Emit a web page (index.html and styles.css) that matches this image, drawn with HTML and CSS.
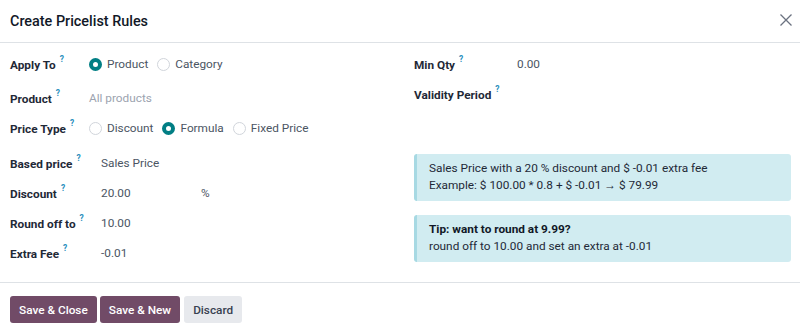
FILE: index.html
```html
<!DOCTYPE html>
<html>
<head>
<meta charset="utf-8">
<link rel="stylesheet" href="styles.css">
</head>
<body>
<div class="dialog">
  <header class="header">
    <h4 class="title">Create Pricelist Rules</h4>
    <span class="close">
      <svg width="12" height="12" viewBox="0 0 12 12"><path d="M0.5 0.5L11.5 11.5M11.5 0.5L0.5 11.5" stroke="#6b7280" stroke-width="1.3" fill="none"/></svg>
    </span>
  </header>
  <main class="body">
    <div class="col">
      <div class="group g1">
        <div class="row"><div class="label">Apply To<sup>?</sup></div>
          <div class="value radios">
            <span class="radio on"></span><span class="rl">Product</span>
            <span class="radio"></span><span class="rl">Category</span>
          </div></div>
        <div class="row r2"><div class="label">Product<sup>?</sup></div>
          <div class="value placeholder">All products</div></div>
        <div class="row"><div class="label">Price Type<sup>?</sup></div>
          <div class="value radios">
            <span class="radio"></span><span class="rl">Discount</span>
            <span class="radio on"></span><span class="rl">Formula</span>
            <span class="radio"></span><span class="rl">Fixed Price</span>
          </div></div>
      </div>
      <div class="group g2">
        <div class="row"><div class="label">Based price<sup>?</sup></div>
          <div class="value">Sales Price</div></div>
        <div class="row"><div class="label">Discount<sup>?</sup></div>
          <div class="value"><span class="num">20.00</span><span>%</span></div></div>
        <div class="row"><div class="label">Round off to<sup>?</sup></div>
          <div class="value">10.00</div></div>
        <div class="row"><div class="label">Extra Fee<sup>?</sup></div>
          <div class="value">-0.01</div></div>
      </div>
    </div>
    <div class="col">
      <div class="group g3">
        <div class="row"><div class="label">Min Qty<sup>?</sup></div>
          <div class="value">0.00</div></div>
        <div class="row"><div class="label">Validity Period<sup>?</sup></div>
          <div class="value"></div></div>
      </div>
      <div class="alert a1">
        <div>Sales Price with a 20 % discount and $ -0.01 extra fee</div>
        <div>Example: $ 100.00 * 0.8 + $ -0.01 → $ 79.99</div>
      </div>
      <div class="alert a2">
        <div class="strong">Tip: want to round at 9.99?</div>
        <div>round off to 10.00 and set an extra at -0.01</div>
      </div>
    </div>
  </main>
  <footer class="footer">
    <button class="btn primary">Save &amp; Close</button>
    <button class="btn primary">Save &amp; New</button>
    <button class="btn secondary">Discard</button>
  </footer>
</div>
</body>
</html>
```

FILE: styles.css
```css
* { box-sizing: border-box; }
html, body { margin: 0; padding: 0; background: #fff; }
body {
  font-family: Roboto, "Noto Sans", sans-serif;
  font-size: 11.8px;
  color: #374151;
  width: 800px;
  height: 335px;
  overflow: hidden;
}
.header {
  height: 43px;
  border-bottom: 1px solid #dee2e6;
  display: flex;
  align-items: center;
  justify-content: space-between;
  padding: 0 8px 0 10px;
}
.title {
  margin: 0;
  font-size: 14.4px;
  font-weight: 500;
  color: #111827;
}
.close { display: flex; width: 12px; height: 12px; margin-top: -2px; }
.body {
  display: grid;
  grid-template-columns: 390px 1fr;
  column-gap: 14px;
  padding: 6px 9px 0 10px;
  height: 240px;
  border-bottom: 1px solid #dee2e6;
}
.row {
  display: flex;
  align-items: center;
  height: 30px;
}
.r2 { margin-top: 4px; }
.label {
  font-weight: 700;
  color: #1f2937;
  flex: none;
}
.label sup {
  color: #2a8fbd;
  font-size: 8.5px;
  font-weight: 700;
  margin-left: 4px;
  position: relative;
  top: -2px;
}
.g1 .label { width: 79px; }
.g2 { margin-top: 5px; }
.g2 .label { width: 91px; }
.g3 .label { width: 103px; }
.value { color: #4b5563; display: flex; align-items: center; }
.placeholder { color: #9ca3af; }
.num { width: 100px; }
.radios .radio {
  width: 13px; height: 13px;
  border-radius: 50%;
  border: 1px solid #d1d5db;
  background: #fff;
  margin-right: 5px;
  flex: none;
}
.radios .radio.on {
  border: 4px solid #017e84;
  background: #fff;
}
.radios .rl { margin-right: 9px; }
.alert {
  background: #d1ecf1;
  border-left: 3px solid #a7d9e3;
  border-radius: 3px;
  padding: 6px 12px 7px 12px;
  line-height: 17px;
  color: #1f2937;
}
.a1 { margin-top: 45px; }
.a2 { margin-top: 14px; }
.strong { font-weight: 700; color: #111827; }
.footer {
  display: flex;
  gap: 3px;
  padding: 13px 10px 0 10px;
}
.btn {
  font-family: inherit;
  font-size: 11.8px;
  font-weight: 500;
  height: 27px;
  padding: 0 9px;
  border: none;
  border-radius: 3px;
}
.primary { background: #714b67; color: #fff; }
.secondary { background: #e7e9ed; color: #374151; margin-left: 1px; }
```
